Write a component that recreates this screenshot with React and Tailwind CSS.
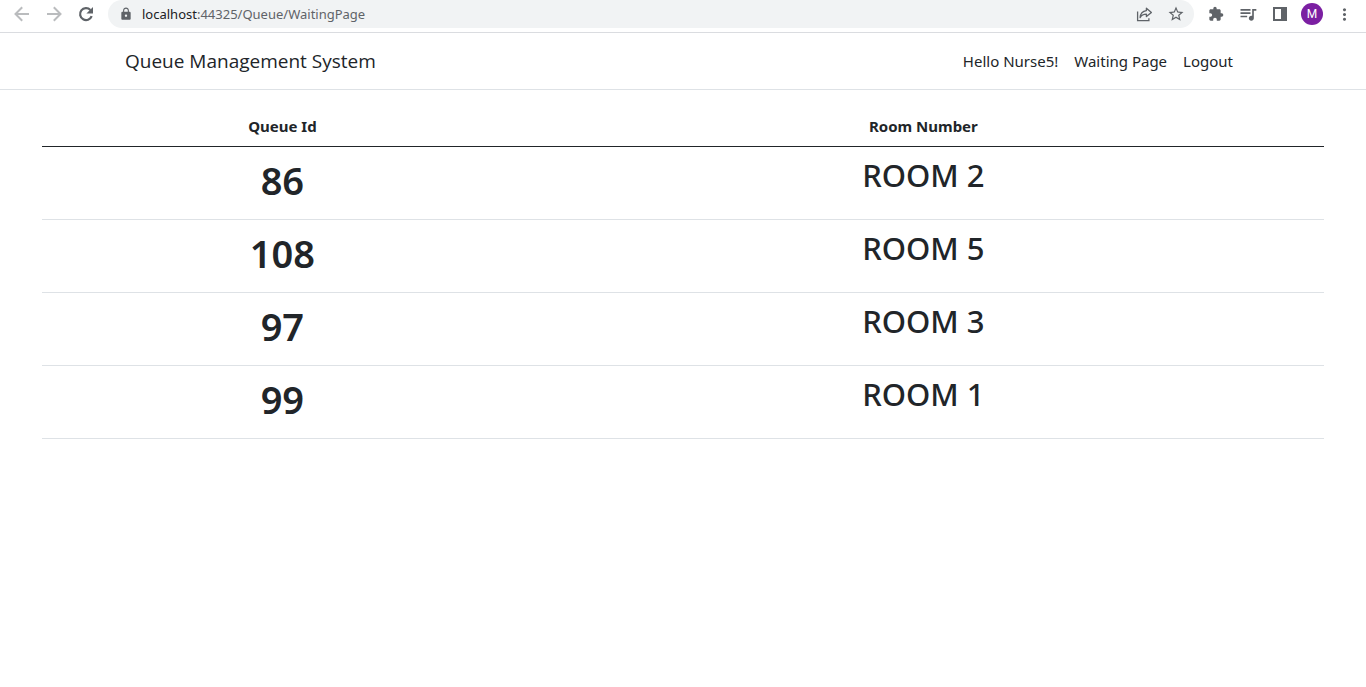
import React from "react";
import {
  MdLock,
  MdStarBorder,
  MdExtension,
  MdQueueMusic,
  MdMoreVert,
} from "react-icons/md";

const rows = [
  { id: 86, room: "ROOM 2" },
  { id: 108, room: "ROOM 5" },
  { id: 97, room: "ROOM 3" },
  { id: 99, room: "ROOM 1" },
];

function BackIcon() {
  return (
    <svg width="16" height="16" viewBox="0 0 16 16" fill="none" stroke="#babcbe" strokeWidth="2">
      <path d="M15 8H2M8.2 1.3 1.5 8l6.7 6.7" />
    </svg>
  );
}

function ForwardIcon() {
  return (
    <svg width="16" height="16" viewBox="0 0 16 16" fill="none" stroke="#babcbe" strokeWidth="2">
      <path d="M1 8h13M7.8 1.3 14.5 8l-6.7 6.7" />
    </svg>
  );
}

function ReloadIcon() {
  return (
    <svg width="16" height="16" viewBox="0 0 16 16" fill="none" stroke="currentColor" strokeWidth="2.2">
      <path d="M13.7 10.2A6 6 0 1 1 12.4 3.9" />
      <path d="M15 1v6.6H8.4Z" fill="currentColor" stroke="none" />
    </svg>
  );
}

function ShareIcon() {
  return (
    <svg width="18" height="18" viewBox="0 0 18 18" fill="none" stroke="currentColor" strokeWidth="1.3">
      <path d="M2.6 6.5v9.1h11.3v-2.4" />
      <path d="M11.4 3.2 16.4 7.4 11.4 11.6V9.2C8.4 9.2 6.4 10.2 5.1 12.6 5.4 8.9 7.4 6.1 11.4 5.6Z" strokeLinejoin="round" />
    </svg>
  );
}

function SidePanelIcon() {
  return (
    <svg width="14" height="14" viewBox="0 0 14 14" fill="currentColor">
      <path fillRule="evenodd" d="M0 0h14v14H0ZM2 2v10h6V2Z" />
    </svg>
  );
}

function IconButton({ label, children }) {
  return (
    <button
      type="button"
      aria-label={label}
      className="flex h-7 w-8 shrink-0 items-center justify-center text-[#5f6368]"
    >
      {children}
    </button>
  );
}

function BrowserBar() {
  return (
    <div className="flex h-[33px] items-start border-b border-[#dadce0] bg-white px-[6px]">
      <IconButton label="Back">
        <BackIcon />
      </IconButton>
      <IconButton label="Forward">
        <ForwardIcon />
      </IconButton>
      <IconButton label="Reload">
        <ReloadIcon />
      </IconButton>
      <div className="mx-[6px] flex h-7 min-w-0 grow items-center rounded-full bg-[#f1f3f4] pl-[11px] pr-[2px]">
        <MdLock size={14} className="shrink-0 text-[#5f6368]" />
        <div className="min-w-0 grow truncate pl-[9px] pt-px text-[13px] text-[#5f6368]">
          <span className="text-[#202124]">localhost</span>:44325/Queue/WaitingPage
        </div>
        <IconButton label="Share this page">
          <ShareIcon />
        </IconButton>
        <IconButton label="Bookmark this page">
          <MdStarBorder size={18} />
        </IconButton>
      </div>
      <IconButton label="Extensions">
        <MdExtension size={16} />
      </IconButton>
      <IconButton label="Media controls">
        <MdQueueMusic size={20} />
      </IconButton>
      <IconButton label="Side panel">
        <SidePanelIcon />
      </IconButton>
      <IconButton label="Profile">
        <span className="flex size-[22px] items-center justify-center rounded-full bg-[#7b1fa2] font-['Roboto',sans-serif] text-xs text-white">
          M
        </span>
      </IconButton>
      <IconButton label="Menu">
        <MdMoreVert size={19} />
      </IconButton>
    </div>
  );
}

function NavBar() {
  return (
    <nav className="border-b border-[#dee2e6] bg-white py-2">
      <div className="mx-auto flex max-w-[1140px] items-center justify-between px-3">
        <a href="#" className="font-['Open_Sans','Noto_Sans',sans-serif] text-[19px] leading-10">
          Queue Management System
        </a>
        <ul className="flex text-[15px] leading-6">
          <li><a href="#" className="block p-2">Hello Nurse5!</a></li>
          <li><a href="#" className="block p-2">Waiting Page</a></li>
          <li><a href="#" className="block p-2">Logout</a></li>
        </ul>
      </div>
    </nav>
  );
}

export default function App() {
  return (
    <div className="min-h-screen bg-white font-['Noto_Sans','Open_Sans',sans-serif] text-[#212529]">
      <BrowserBar />
      <NavBar />
      <main className="px-[42px] pt-4">
        <table className="w-full table-fixed border-collapse text-center">
          <thead>
            <tr className="border-b border-[#212529] text-[15px] leading-6">
              <th scope="col" className="w-3/8 p-2 font-bold">Queue Id</th>
              <th scope="col" className="p-2 font-bold">Room Number</th>
            </tr>
          </thead>
          <tbody>
            {rows.map((row) => (
              <tr key={row.id} className="border-b border-[#dee2e6] align-top">
                <td className="px-2 pt-[9px] pb-[15px]">
                  <h1 className="text-[38px] leading-[48px] font-semibold">{row.id}</h1>
                </td>
                <td className="px-2 pt-[9px] pb-[15px]">
                  <h2 className="text-[31px] leading-[38px] font-medium">{row.room}</h2>
                </td>
              </tr>
            ))}
          </tbody>
        </table>
      </main>
    </div>
  );
}
